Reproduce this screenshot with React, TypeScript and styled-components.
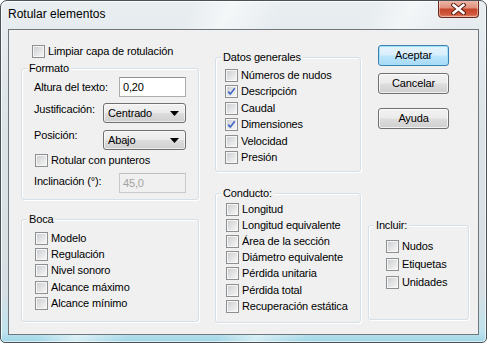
import styled, { createGlobalStyle } from "styled-components";

const GlobalStyle = createGlobalStyle`
  html, body { margin: 0; padding: 0; background: #ffffff; }
  body { font-family: "Liberation Sans", Arial, sans-serif; }
`;

// ventana y marco
const Window = styled.div`
  width: 487px;
  height: 343px;
  box-sizing: border-box;
  border: 1px solid #4a5258;
  border-radius: 7px 7px 5px 5px;
  padding: 0 7px 7px;
  display: flex;
  flex-direction: column;
  background:
    linear-gradient(115deg, transparent 0%, transparent 30%, rgba(255,255,255,0.55) 36%, transparent 44%, transparent 58%, rgba(255,255,255,0.5) 64%, transparent 72%),
    linear-gradient(180deg, #e9eef1 0%, #dbe3e7 40%, #d7dfe4 85%, #bfe3ee 97%, #9fd6e6 100%);
  box-shadow: inset 1px 1px 0 rgba(255,255,255,0.8), inset -1px -1px 0 rgba(255,255,255,0.6);
  overflow: hidden;
`;

const TitleBar = styled.div`
  height: 28px;
  display: flex;
  justify-content: space-between;
  align-items: flex-start;
`;

const Title = styled.span`
  margin-top: 6px;
  font-size: 12px;
  line-height: 14px;
  color: #000;
`;

const CloseButton = styled.div`
  margin-top: -1px;
  width: 41px;
  height: 18px;
  box-sizing: border-box;
  border: 1px solid #6b2a1f;
  border-top: none;
  border-radius: 0 0 4px 4px;
  background: linear-gradient(180deg, #efbcae 0%, #e0917c 45%, #c7452b 55%, #cf5a3f 85%, #e88b70 100%);
  box-shadow: inset 0 0 0 1px rgba(255,255,255,0.4);
  display: flex;
  align-items: center;
  justify-content: center;
`;

const Client = styled.div`
  flex: 1;
  border: 1px solid #6f777c;
  background: #f0f0f0;
  display: flex;
  align-items: flex-start;
  padding-left: 12px;
  font-size: 11px;
  letter-spacing: -0.15px;
  color: #000;
`;

const Column = styled.div<{ $w: number; $ml?: number; $pt: number }>`
  width: ${(p) => p.$w}px;
  margin-left: ${(p) => p.$ml ?? 0}px;
  padding-top: ${(p) => p.$pt}px;
  display: flex;
  flex-direction: column;
`;

// grupos
const Group = styled.div<{ $h: number; $mt: number }>`
  height: ${(p) => p.$h}px;
  margin-top: ${(p) => p.$mt}px;
  box-sizing: border-box;
  border: 1px solid #d5dfe5;
  border-radius: 3px;
  box-shadow: inset 1px 1px 0 #ffffff, 1px 1px 0 #ffffff;
  display: flex;
  flex-direction: column;
`;

const GroupLabel = styled.span`
  align-self: flex-start;
  margin: -7px 0 0 5px;
  padding: 0 2px;
  line-height: 13px;
  height: 13px;
  background: #f0f0f0;
`;

const List = styled.div<{ $mt: number }>`
  margin-top: ${(p) => p.$mt}px;
`;

const CheckRow = styled.label<{ $h?: number; $indent: number; $mt?: number }>`
  display: flex;
  align-items: center;
  gap: 3px;
  height: ${(p) => p.$h ?? 13}px;
  margin-top: ${(p) => p.$mt ?? 0}px;
  padding-left: ${(p) => p.$indent}px;
  line-height: 13px;
  white-space: nowrap;
`;

const Box = styled.span`
  position: relative;
  flex: none;
  width: 13px;
  height: 13px;
  box-sizing: border-box;
  border: 1px solid #8e8f8f;
  background: #f6f6f6;
  display: flex;
  align-items: center;
  justify-content: center;
  &::before {
    content: "";
    width: 9px;
    height: 9px;
    background: linear-gradient(135deg, #cdd0d4 0%, #e3e4e6 55%, #f5f5f5 100%);
  }
  svg {
    position: absolute;
    left: 0;
    top: 0;
  }
`;

const FieldRow = styled.div<{ $mt: number; $h?: number }>`
  display: flex;
  justify-content: space-between;
  align-items: flex-start;
  height: ${(p) => p.$h ?? 20}px;
  margin-top: ${(p) => p.$mt}px;
  padding: 0 12px;
`;

const FieldLabel = styled.span<{ $off: number }>`
  margin-top: ${(p) => p.$off}px;
  line-height: 13px;
`;

const TextInput = styled.div<{ $disabled?: boolean }>`
  width: 67px;
  height: 20px;
  box-sizing: border-box;
  border: 1px solid ${(p) => (p.$disabled ? "#c9c9c9" : "#abadb3")};
  border-top-color: ${(p) => (p.$disabled ? "#c0c0c0" : "#8e9196")};
  background: ${(p) => (p.$disabled ? "#f0f0f0" : "#ffffff")};
  color: ${(p) => (p.$disabled ? "#a3a3a3" : "#000000")};
  padding-left: 3px;
  line-height: 18px;
`;

const Select = styled.div`
  width: 83px;
  height: 20px;
  box-sizing: border-box;
  border: 1px solid #707070;
  border-radius: 3px;
  background: linear-gradient(180deg, #f2f2f2 0%, #ebebeb 48%, #dddddd 52%, #cfcfcf 100%);
  box-shadow: inset 0 0 0 1px rgba(255,255,255,0.6);
  display: flex;
  align-items: center;
  justify-content: space-between;
  padding: 1px 6px 0 4px;
  line-height: 13px;
`;

const Button = styled.div<{ $default?: boolean; $mt: number }>`
  width: 71px;
  height: 21px;
  margin: ${(p) => p.$mt}px 0 0 10px;
  box-sizing: border-box;
  border: 1px solid ${(p) => (p.$default ? "#3c7fb1" : "#707070")};
  border-radius: 3px;
  background: ${(p) =>
    p.$default
      ? "linear-gradient(180deg, #e5f4fc 0%, #d9effc 48%, #bde6fd 52%, #a7d9f5 100%)"
      : "linear-gradient(180deg, #f2f2f2 0%, #ebebeb 48%, #dddddd 52%, #cfcfcf 100%)"};
  box-shadow: inset 0 0 0 1px ${(p) => (p.$default ? "#a3e0fa" : "rgba(255,255,255,0.7)")};
  display: flex;
  align-items: center;
  justify-content: center;
  line-height: 13px;
`;

const Check = ({ label, checked, indent, h, mt }: { label: string; checked?: boolean; indent: number; h?: number; mt?: number }) => (
  <CheckRow $indent={indent} $h={h} $mt={mt}>
    <Box>
      {checked && (
        <svg width="11" height="11" viewBox="0 0 11 11">
          <path d="M2.2 5.6 L4.3 8 L8.8 2.3" fill="none" stroke="#4166c8" strokeWidth="1.6" />
        </svg>
      )}
    </Box>
    <span>{label}</span>
  </CheckRow>
);

const Arrow = () => (
  <svg width="9" height="5" viewBox="0 0 9 5">
    <polygon points="0,0 9,0 4.5,5" fill="#000" />
  </svg>
);

const App = () => {
  const boca = ["Modelo", "Regulación", "Nivel sonoro", "Alcance máximo", "Alcance mínimo"];
  const datos: [string, boolean][] = [
    ["Números de nudos", false],
    ["Descripción", true],
    ["Caudal", false],
    ["Dimensiones", true],
    ["Velocidad", false],
    ["Presión", false],
  ];
  const conducto = [
    "Longitud",
    "Longitud equivalente",
    "Área de la sección",
    "Diámetro equivalente",
    "Pérdida unitaria",
    "Pérdida total",
    "Recuperación estática",
  ];
  const incluir = ["Nudos", "Etiquetas", "Unidades"];

  return (
    <>
      <GlobalStyle />
      <Window>
        <TitleBar>
          <Title>Rotular elementos</Title>
          <CloseButton>
            <svg width="15" height="12" viewBox="0 0 15 12">
              <path d="M2.5 2 L12.5 10 M12.5 2 L2.5 10" stroke="#5a1f14" strokeWidth="4.4" strokeLinecap="square" />
              <path d="M2.5 2 L12.5 10 M12.5 2 L2.5 10" stroke="#ffffff" strokeWidth="2.4" strokeLinecap="square" />
            </svg>
          </CloseButton>
        </TitleBar>
        <Client>
          <Column $w={178} $pt={15}>
            <Check label="Limpiar capa de rotulación" indent={11} />
            <Group $h={132} $mt={10}>
              <GroupLabel>Formato</GroupLabel>
              <FieldRow $mt={2}>
                <FieldLabel $off={4}>Altura del texto:</FieldLabel>
                <TextInput>0,20</TextInput>
              </FieldRow>
              <FieldRow $mt={6}>
                <FieldLabel $off={0}>Justificación:</FieldLabel>
                <Select>
                  <span>Centrado</span>
                  <Arrow />
                </Select>
              </FieldRow>
              <FieldRow $mt={7}>
                <FieldLabel $off={-1}>Posición:</FieldLabel>
                <Select>
                  <span>Abajo</span>
                  <Arrow />
                </Select>
              </FieldRow>
              <Check label="Rotular con punteros" indent={13} mt={4} />
              <FieldRow $mt={6}>
                <FieldLabel $off={2}>Inclinación (°):</FieldLabel>
                <TextInput $disabled>45,0</TextInput>
              </FieldRow>
            </Group>
            <Group $h={103} $mt={19}>
              <GroupLabel>Boca</GroupLabel>
              <List $mt={4}>
                {boca.map((b) => (
                  <Check key={b} label={b} indent={13} h={16.33} />
                ))}
              </List>
            </Group>
          </Column>
          <Column $w={146} $ml={16} $pt={27}>
            <Group $h={115} $mt={0}>
              <GroupLabel>Datos generales</GroupLabel>
              <List $mt={3}>
                {datos.map(([d, c]) => (
                  <Check key={d} label={d} checked={c} indent={9} h={16.5} />
                ))}
              </List>
            </Group>
            <Group $h={130} $mt={21}>
              <GroupLabel>Conducto:</GroupLabel>
              <List $mt={1}>
                {conducto.map((c) => (
                  <Check key={c} label={c} indent={10} h={16.2} />
                ))}
              </List>
            </Group>
          </Column>
          <Column $w={101} $ml={7} $pt={15}>
            <Button $default $mt={0}>Aceptar</Button>
            <Button $mt={7}>Cancelar</Button>
            <Button $mt={14}>Ayuda</Button>
            <Group $h={95} $mt={96}>
              <GroupLabel>Incluir:</GroupLabel>
              <List $mt={5}>
                {incluir.map((i) => (
                  <Check key={i} label={i} indent={17} h={18.3} />
                ))}
              </List>
            </Group>
          </Column>
        </Client>
      </Window>
    </>
  );
};

export default App;
